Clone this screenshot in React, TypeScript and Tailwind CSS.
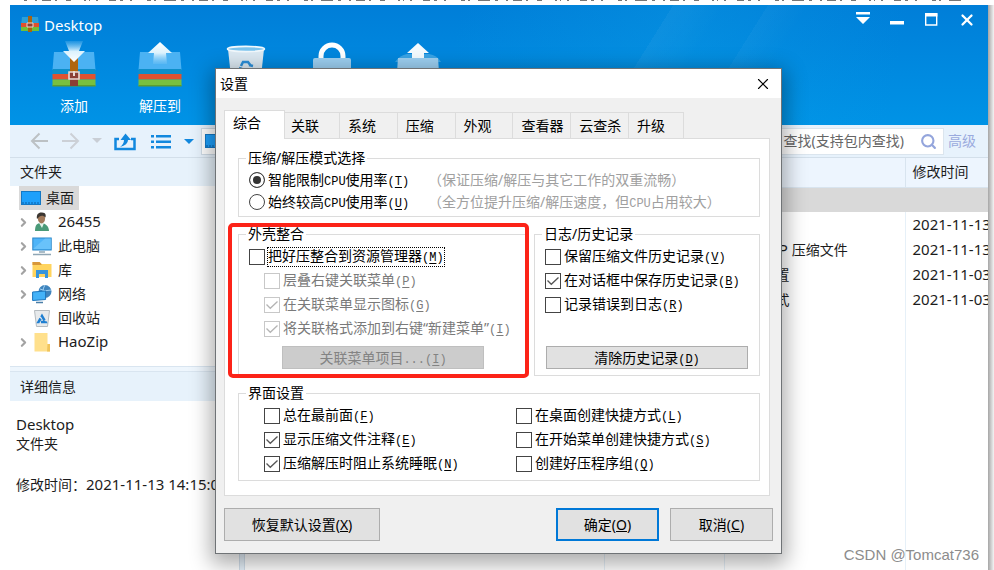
import React from "react";
import { ChevronRight, Search, X } from "lucide-react";

const UI = "font-['Noto_Sans','Noto_Sans_CJK_SC',sans-serif]";

/* ---------- small text helpers ---------- */

function Latin({ children }: { children: React.ReactNode }) {
  return <span className="font-['Liberation_Mono',monospace] text-xs">{children}</span>;
}

function Key({ k }: { k: string }) {
  return (
    <Latin>
      (<u className="underline-offset-2">{k}</u>)
    </Latin>
  );
}

/* ---------- form parts ---------- */

type CheckProps = {
  text: string;
  k: string;
  checked?: boolean;
  disabled?: boolean;
  focused?: boolean;
};

function Check({ text, k, checked, disabled, focused }: CheckProps) {
  return (
    <label className={`flex h-6 items-center gap-[3px] ${disabled ? "text-[#7a7a7a]" : "text-black"}`}>
      <span className="grid size-4 shrink-0 [&>*]:[grid-area:1/1]">
        <input
          type="checkbox"
          defaultChecked={checked}
          disabled={disabled}
          className="peer size-4 appearance-none border border-[#444] bg-white disabled:border-[#c8c8c8]"
        />
        <svg
          viewBox="0 0 16 16"
          className="pointer-events-none invisible size-4 text-[#555] peer-checked:visible peer-disabled:text-[#b4b4b4]"
        >
          <path d="M2.500 7.500l3.800 3.800L13.500 4.500" fill="none" stroke="currentColor" strokeWidth="1.300" />
        </svg>
      </span>
      <span className={`whitespace-nowrap leading-4 ${focused ? "outline-1 outline-dotted outline-black" : ""}`}>
        {text}
        <Key k={k} />
      </span>
    </label>
  );
}

type RadioProps = { before: string; after: string; k: string; checked?: boolean; hint: React.ReactNode };

function Radio({ before, after, k, checked, hint }: RadioProps) {
  return (
    <div className="flex h-[22px] items-center">
      <label className="flex w-[179px] items-center gap-[3px] whitespace-nowrap">
        <input
          type="radio"
          name="cpu"
          defaultChecked={checked}
          className="size-4 shrink-0 appearance-none rounded-full border border-[#444] bg-white checked:bg-[#333] checked:shadow-[inset_0_0_0_3px_#fff]"
        />
        <span>
          {before}
          <Latin>CPU</Latin>
          {after}
          <Key k={k} />
        </span>
      </label>
      <span className="whitespace-nowrap text-[#a0a0a0]">{hint}</span>
    </div>
  );
}

function Group({ title, className, children }: { title: string; className: string; children: React.ReactNode }) {
  return (
    <fieldset className={`min-w-0 border border-[#dcdcdc] pt-px ${className}`}>
      <legend className="-ml-[3px] h-5 px-[2px] leading-5">{title}</legend>
      {children}
    </fieldset>
  );
}

/* ---------- toolbar drawings ---------- */

function ArchiveBox({ open }: { open?: boolean }) {
  return (
    <svg viewBox="0 0 44 48" className="h-12 w-11">
      <defs>
        <linearGradient id={open ? "up" : "down"} x1="0" x2="0" y1={open ? "0" : "1"} y2={open ? "1" : "0"}>
          <stop offset="0" stopColor="#fff" />
          <stop offset=".5" stopColor="#dcf2fd" />
          <stop offset="1" stopColor="#8fd0f7" stopOpacity=".2" />
        </linearGradient>
      </defs>
      <path d="M2 12h40l1.500 18H.5z" fill="#4bb2f3" />
      <path d="M.5 29h43v5H.5z" fill="#0d8fc9" />
      <path d="M.5 34h43v5.500H.5z" fill="#df5230" />
      <path d="M.5 39.500h43V46H.5z" fill="#78c03e" />
      <path d="M.5 45h43v1.500H.5z" fill="#5d9d2e" />
      {open ? (
        <path d="M22 2l12 11h-6l1 11H15l1-11h-6z" fill="url(#up)" />
      ) : (
        <g>
          <path d="M18 14h8v32h-8z" fill="#b0650f" />
          <path d="M18 34h8v12h-8z" fill="#8b3f35" />
          <path d="M17 32h10v7H17z" fill="#8b3f35" stroke="#ead9d2" strokeWidth="1.600" />
          <path d="M22 31v5" stroke="#ead9d2" strokeWidth="2" />
          <path d="M13 1h18l-4 10h6L22 22 11 11h6z" fill="url(#down)" />
        </g>
      )}
    </svg>
  );
}

function TrashArt() {
  return (
    <svg viewBox="0 0 44 48" className="h-12 w-11">
      <path d="M4 9l4 37h28l4-37z" fill="#dce9f2" />
      <ellipse cx="22" cy="9" rx="18.500" ry="2.600" fill="#7cc4ee" stroke="#f2f9fd" strokeWidth="1.600" />
      <path d="M17 26l2-4h5l3 4M15 28l3 1M25 25l4 1" fill="none" stroke="#2b8fd9" strokeWidth="2.500" />
    </svg>
  );
}

function LockArt() {
  return (
    <svg viewBox="0 0 44 48" className="h-12 w-11">
      <path d="M11 20v-4a11 11 0 0 1 22 0v4" fill="none" stroke="#fff" strokeWidth="5" />
      <rect x="3" y="18" width="38" height="28" rx="2" fill="#9dd0f2" />
    </svg>
  );
}

function UploadArt() {
  return (
    <svg viewBox="0 0 48 48" className="h-12 w-12">
      <path d="M1 22q5-7 12-8h22q8 1 12 8z" fill="#3aa4e6" />
      <path d="M4 18h40l2 28H2z" fill="#9dd0f2" />
      <path d="M24 3l11 10h-5v5H18v-5h-5z" fill="#f4fbff" />
    </svg>
  );
}

/* ---------- tree icons ---------- */

function DesktopIcon() {
  return (
    <svg viewBox="0 0 20 20" className="size-5 shrink-0">
      <rect x=".5" y="3.500" width="19" height="13" fill="#1ea0fb" stroke="#1478c4" />
      <path d="M1 15h18" stroke="#0b5fa5" strokeDasharray="2 1" />
    </svg>
  );
}
function UserIcon() {
  return (
    <svg viewBox="0 0 20 20" className="size-5 shrink-0">
      <path d="M3 19c0-6 2-8 6-8s8 3 8 8z" fill="#4a9a78" />
      <path d="M7 11l3 5 2-5z" fill="#e4f2ea" />
      <ellipse cx="9.500" cy="6.500" rx="3.600" ry="5" fill="#a1795a" />
      <path d="M5 7c-1-5 2-7 5-6.500 4 0 4 3 3.500 5-2-2-4-2-6-1z" fill="#3b3631" />
    </svg>
  );
}
function ComputerIcon() {
  return (
    <svg viewBox="0 0 20 20" className="size-5 shrink-0">
      <rect x=".8" y="2" width="18.400" height="12" fill="#4eb4f8" stroke="#2a86c8" />
      <path d="M1 13L13 2.500h6V13z" fill="#7ccbfb" opacity=".6" />
      <path d="M1 18.500h18M7 16h6" stroke="#8fa6b5" strokeWidth="1.500" />
    </svg>
  );
}
function LibraryIcon() {
  return (
    <svg viewBox="0 0 20 20" className="size-5 shrink-0">
      <path d="M.5 2h7l2 2h10v13H.5z" fill="#ffd45e" />
      <path d="M.5 2h7l2 2v1h-9z" fill="#d8973a" />
      <path d="M4 10h12v8h-3v-4H7v4H4z" fill="#3795dc" />
    </svg>
  );
}
function NetworkIcon() {
  return (
    <svg viewBox="0 0 20 20" className="size-5 shrink-0">
      <circle cx="13" cy="7.500" r="6.500" fill="#3f84bd" />
      <path d="M8 5q5 3 11 1M13 1q-4 6 0 13" fill="none" stroke="#9fd0f2" />
      <path d="M.6 8l13-1v8.500l-13 1z" fill="#43b2f8" stroke="#1c76bd" />
      <path d="M4 18.500h7" stroke="#4b7fa8" strokeWidth="1.500" />
    </svg>
  );
}
function RecycleIcon() {
  return (
    <svg viewBox="0 0 20 20" className="size-5 shrink-0">
      <path d="M2.500 2.500h15l-2 16h-11z" fill="#e7eaec" stroke="#b5bbbf" />
      <path d="M10 8l3.500 6h-7z" fill="none" stroke="#1f7fd1" strokeWidth="2.500" strokeDasharray="5 1.500" />
    </svg>
  );
}
function FolderIcon() {
  return (
    <svg viewBox="0 0 20 20" className="size-5 shrink-0">
      <path d="M2.500 1h13v11H18v7.500H2.500z" fill="#ffe08c" />
      <path d="M15.500 12H18v7.500h-3z" fill="#f0c45c" />
    </svg>
  );
}

const tree = [
  { name: "26455", icon: <UserIcon />, more: true, latin: true },
  { name: "此电脑", icon: <ComputerIcon />, more: true },
  { name: "库", icon: <LibraryIcon />, more: true },
  { name: "网络", icon: <NetworkIcon />, more: true },
  { name: "回收站", icon: <RecycleIcon />, more: false },
  { name: "HaoZip", icon: <FolderIcon />, more: true, latin: true },
];

const files = [
  { type: "", date: "2021-11-13" },
  {
    type: (
      <>
        好压 <span className="text-[15px]">ZIP </span>压缩文件
      </>
    ),
    date: "2021-11-13",
  },
  { type: "配置设置", date: "2021-11-03" },
  { type: "快捷方式", date: "2021-11-03" },
];

/* ---------- window areas ---------- */

function Header() {
  return (
    <header className="h-[120px] shrink-0 bg-[linear-gradient(122deg,transparent_0_63%,#ffffff0a_63%,transparent_68%),linear-gradient(122deg,transparent_0_72%,#ffffff08_72%,transparent_76%),linear-gradient(100deg,transparent_45%,#0a9be466_68%,transparent_90%),linear-gradient(#007ed8,#0093e6)] text-white">
      <div className="flex h-[35px] justify-between">
        <div className="flex items-center gap-1 pt-[5px] pl-[10px] text-[15px]">
          <svg viewBox="0 0 20 18" className="h-[18px] w-5">
            <path d="M2 1h16l1 9H1z" fill="#2a9fd8" />
            <path d="M1 7h18v4H1z" fill="#e0512f" />
            <path d="M1 11h18v4H1z" fill="#6fbf3a" />
            <path d="M8 0h4v16H8z" fill="#a9620f" />
            <path d="M7 7h6v4H7z" fill="#8b3f35" stroke="#ead9d2" />
          </svg>
          Desktop
        </div>
        <div className="flex items-start gap-[18px] pt-[6px] pr-[12px]">
          <button aria-label="菜单">
            <svg viewBox="0 0 16 16" className="size-4" fill="#fff">
              <path d="M0 1h14v2.500H0zM0 6h14l-7 7z" />
            </svg>
          </button>
          <button aria-label="最小化">
            <svg viewBox="0 0 16 16" className="size-4" fill="#fff">
              <path d="M0 10h14v3.500H0z" />
            </svg>
          </button>
          <button aria-label="最大化">
            <svg viewBox="0 0 16 16" className="size-4">
              <path d="M1.700 3h11v11h-11z" fill="none" stroke="#fff" strokeWidth="1.400" />
              <path d="M1 2h12.400v3.500H1z" fill="#fff" />
            </svg>
          </button>
          <button aria-label="关闭">
            <X className="size-[18px]" strokeWidth={3} />
          </button>
        </div>
      </div>
      <nav className="flex pl-[21px] text-sm">
        <button className="flex w-[86px] flex-col items-center gap-2">
          <ArchiveBox />
          <span>添加</span>
        </button>
        <button className="flex w-[86px] flex-col items-center gap-2">
          <ArchiveBox open />
          <span>解压到</span>
        </button>
        <button className="flex w-[86px] flex-col items-center" aria-label="删除">
          <TrashArt />
        </button>
        <button className="flex w-[86px] flex-col items-center" aria-label="密码">
          <LockArt />
        </button>
        <button className="flex w-[86px] flex-col items-center" aria-label="自解压">
          <UploadArt />
        </button>
      </nav>
    </header>
  );
}

function Toolbar() {
  return (
    <div className="flex h-[33px] shrink-0 items-center border-b border-[#d3dfea] bg-[#e7f2fc] pl-5">
      <button aria-label="后退">
        <svg viewBox="0 0 20 20" className="size-5" fill="none" stroke="#bcc1c4" strokeWidth="2">
          <path d="M18 10H2M9.500 2.500L2 10l7.500 7.500" />
        </svg>
      </button>
      <button aria-label="前进" className="ml-[10px]">
        <svg viewBox="0 0 20 20" className="size-5" fill="none" stroke="#ccd0d6" strokeWidth="2">
          <path d="M2 10h16M10.500 2.500L18 10l-7.500 7.500" />
        </svg>
      </button>
      <button aria-label="历史" className="ml-3">
        <svg viewBox="0 0 10 6" className="h-[6px] w-[10px]">
          <path d="M0 0h10L5 5z" fill="#c9ced5" />
        </svg>
      </button>
      <button aria-label="上一级" className="ml-3">
        <svg viewBox="0 0 22 20" className="h-5 w-[22px]" fill="none" stroke="#1288de">
          <path d="M5 8H1.500v10h19V8H17" strokeWidth="2.500" />
          <path d="M11.500 2.500L17 9h-3q0 5-8 7 4-3 4-7H6.500z" fill="#1288de" stroke="none" />
        </svg>
      </button>
      <button aria-label="视图" className="ml-[14px]">
        <svg viewBox="0 0 22 16" className="h-4 w-[22px]" fill="#1288de">
          <path d="M1 2h3v2.500H1zM6 2h15v2.500H6zM1 7.500h3V10H1zM6 7.500h15V10H6zM1 13h3v2.500H1zM6 13h15v2.500H6z" />
        </svg>
      </button>
      <button aria-label="视图选项" className="ml-3">
        <svg viewBox="0 0 10 6" className="h-[6px] w-[10px]">
          <path d="M0 1h10L5 6z" fill="#1288de" />
        </svg>
      </button>
      <div className="ml-[7px] flex h-[27px] flex-1 items-center border border-[#cfdbe6] bg-white pl-[3px]">
        <DesktopIcon />
      </div>
      <label className="ml-2 flex h-[27px] w-[190px] items-center border border-[#dbe5ee] bg-white text-sm">
        <input
          aria-label="查找"
          placeholder="查找(支持包内查找)"
          className="w-[149px] bg-transparent text-right outline-none placeholder:text-[#666]"
        />
        <Search className="ml-4 size-[17px] text-[#94a5dc]" strokeWidth={3} />
      </label>
      <a href="#advanced" className="w-[44px] pl-1 text-sm text-[#9aaade]">
        高级
      </a>
    </div>
  );
}

function Sidebar() {
  return (
    <aside className="flex w-[229px] shrink-0 flex-col text-sm">
      <h2 className="h-7 bg-[#e7f2fb] pl-[10px] leading-7">文件夹</h2>
      <ul className="pb-3">
        <li className="ml-[9px] flex h-6 w-[60px] items-center gap-[5px] bg-[#d9d9d9] pl-[2px]">
          <DesktopIcon />
          桌面
        </li>
        {tree.map((t) => (
          <li key={t.name} className="flex h-6 items-center pl-[7px]">
            <span className="w-[15px]">
              {t.more && <ChevronRight className="size-[13px] text-[#a3a3a3]" strokeWidth={4} />}
            </span>
            {t.icon}
            <span className={t.latin ? "ml-[6px] text-[15px]" : "ml-[6px]"}>{t.name}</span>
          </li>
        ))}
      </ul>
      <div className="h-[6px] border-y border-[#d9e5f0] bg-[#eef6fd]" />
      <h2 className="h-[29px] bg-[#e7f2fb] pl-[10px] leading-[29px]">详细信息</h2>
      <div className="pt-[13px] pl-[6px] leading-5 whitespace-nowrap">
        <p className="text-[15px]">Desktop</p>
        <p>文件夹</p>
        <p className="mt-5">
          修改时间：<span className="text-[15px]">2021-11-13 14:15:02</span>
        </p>
      </div>
    </aside>
  );
}

function FileTable() {
  return (
    <div className="min-w-0 flex-1 overflow-hidden">
      <table className="h-full w-full table-fixed border-collapse text-left text-sm whitespace-nowrap">
        <colgroup>
          <col />
          <col className="w-[120px]" />
          <col className="w-[181px]" />
          <col className="w-[83px]" />
        </colgroup>
        <thead>
          <tr className="h-[29px] bg-[#edf5fe]">
            <th className="border-r border-b border-[#d8e4ef]" />
            <th className="border-r border-b border-[#d8e4ef]" />
            <th className="border-r border-b border-[#d8e4ef]" />
            <th className="border-b border-[#d8e4ef] pl-[7px] font-normal">修改时间</th>
          </tr>
        </thead>
        <tbody>
          <tr className="h-[25px] bg-[#d9d9d9]">
            <td colSpan={4} />
          </tr>
          {files.map((f, i) => (
            <tr key={i} className="h-[25px]">
              <td className="border-r border-[#e6f0f8]" />
              <td className="border-r border-[#e6f0f8]" />
              <td className="border-r border-[#e6f0f8] pl-[9px]">{f.type}</td>
              <td className="overflow-hidden pl-[7px] text-[15px]">{f.date}</td>
            </tr>
          ))}
          <tr>
            <td className="border-r border-[#e6f0f8]" />
            <td className="border-r border-[#e6f0f8]" />
            <td className="border-r border-[#e6f0f8]" />
            <td />
          </tr>
        </tbody>
      </table>
    </div>
  );
}

/* ---------- settings dialog ---------- */

const tabs = ["关联", "系统", "压缩", "外观", "查看器", "云查杀", "升级"];

function SettingsDialog() {
  return (
    <section
      role="dialog"
      aria-label="设置"
      className="absolute top-[68px] left-[215px] w-[567px] border border-[#6f7376] bg-[#f0f0f0] text-sm text-black shadow-[0_6px_20px_4px_#00000055]"
    >
      <div className="flex h-[29px] items-center justify-between bg-white pr-[9px] pl-1">
        <h1>设置</h1>
        <button aria-label="关闭对话框">
          <X className="size-[18px]" strokeWidth={1.5} />
        </button>
      </div>
      <div className="px-2 pt-3 pb-3">
        <div role="tablist" className="-mb-px flex items-end">
          <button
            role="tab"
            aria-selected="true"
            className="z-10 h-[29px] w-[61px] border border-b-0 border-[#dcdcdc] bg-white pb-1 pl-2 text-left"
          >
            综合
          </button>
          <div className="flex w-[399px]">
            {tabs.map((t) => (
              <button
                key={t}
                role="tab"
                className="h-[27px] flex-1 border border-l-0 border-[#dcdcdc] pl-[8px] text-left first:w-[55px] first:flex-none first:pl-[6px] last:w-[55px] last:flex-none"
              >
                {t}
              </button>
            ))}
          </div>
        </div>
        <div className="mr-[3px] flex flex-col gap-[7px] border border-[#dcdcdc] bg-white pt-[9px] pr-[9px] pb-[14px] pl-[13px]">
          <Group title="压缩/解压模式选择" className="pr-2 pb-[3px] pl-[10px]">
            <Radio before="智能限制" after="使用率" k="T" checked hint="（保证压缩/解压与其它工作的双重流畅）" />
            <Radio
              before="始终较高"
              after="使用率"
              k="U"
              hint={
                <>
                  （全方位提升压缩/解压速度，但<Latin>CPU</Latin>占用较大）
                </>
              }
            />
          </Group>
          <div className="flex gap-[5px]">
            <div className="relative flex-1">
              <Group title="外壳整合" className="pb-[6px] pl-[10px]">
                <Check text="把好压整合到资源管理器" k="M" focused />
                <div className="pl-[15px]">
                  <Check text="层叠右键关联菜单" k="P" disabled />
                  <Check text="在关联菜单显示图标" k="G" checked disabled />
                  <Check text="将关联格式添加到右键“新建菜单”" k="I" checked disabled />
                </div>
                <button
                  disabled
                  className="mt-[5px] ml-[33px] block h-[23px] w-[202px] border border-[#bfbfbf] bg-[#ccc] leading-5 text-[#838383]"
                >
                  关联菜单项目<Latin>...</Latin>
                  <Key k="I" />
                </button>
              </Group>
              <div className="pointer-events-none absolute -top-px right-0 -bottom-[2px] -left-[10px] rounded-[5px] border-4 border-[#fc2318]" />
            </div>
            <Group title="日志/历史记录" className="w-[226px] pb-[6px] pl-[10px]">
              <Check text="保留压缩文件历史记录" k="V" />
              <Check text="在对话框中保存历史记录" k="B" checked />
              <Check text="记录错误到日志" k="R" />
              <button className="mt-[29px] ml-px block h-[23px] w-[202px] border border-[#adadad] bg-[#e1e1e1] leading-5">
                清除历史记录
                <Key k="D" />
              </button>
            </Group>
          </div>
          <Group title="界面设置" className="pb-1 pl-[10px]">
            <div className="grid grid-cols-[252px_1fr] pl-[15px]">
              <Check text="总在最前面" k="F" />
              <Check text="在桌面创建快捷方式" k="L" />
              <Check text="显示压缩文件注释" k="E" checked />
              <Check text="在开始菜单创建快捷方式" k="S" />
              <Check text="压缩解压时阻止系统睡眠" k="N" checked />
              <Check text="创建好压程序组" k="Q" />
            </div>
          </Group>
        </div>
        <div className="mt-3 flex gap-[11px]">
          <button className="mr-auto h-[33px] w-[156px] border border-[#adadad] bg-[#e1e1e1]">
            恢复默认设置(<u>X</u>)
          </button>
          <button className="h-[33px] w-[103px] border-2 border-[#0078d7] bg-[#e1e1e1]">
            确定(<u>O</u>)
          </button>
          <button className="h-[33px] w-[103px] border border-[#adadad] bg-[#e1e1e1]">
            取消(<u>C</u>)
          </button>
        </div>
      </div>
    </section>
  );
}

export default function App() {
  return (
    <div className={`relative flex h-screen flex-col overflow-hidden bg-white text-[#1c1c1c] ${UI}`}>
      <svg className="h-[5px] w-full shrink-0" aria-hidden="true">
        <path
          d="M24 0H962"
          stroke="#777"
          strokeWidth="2"
          strokeDasharray="3 8 2 5 9 4 2 9 5 13 2 3 1 6 2 11 7 4 3 7 2 15 4 3 2 8 12 5"
          fill="none"
        />
      </svg>
      <div className="flex min-h-0 flex-1 pl-[10px]">
        <div className="flex min-w-0 flex-1 flex-col">
          <Header />
          <Toolbar />
          <div className="flex min-h-0 flex-1">
            <Sidebar />
            <div className="w-[6px] shrink-0 border-x border-[#d3e0ec] bg-[#e7f2fb]" />
            <FileTable />
          </div>
        </div>
        <div className="w-[6px] shrink-0 bg-linear-to-r from-[#a6a6a6] to-[#f4f4f4]" />
      </div>
      <SettingsDialog />
      <p className="absolute right-[15px] bottom-1 font-['Liberation_Sans',sans-serif] text-[15px] text-[#8c8c8c]">
        CSDN @Tomcat736
      </p>
    </div>
  );
}
